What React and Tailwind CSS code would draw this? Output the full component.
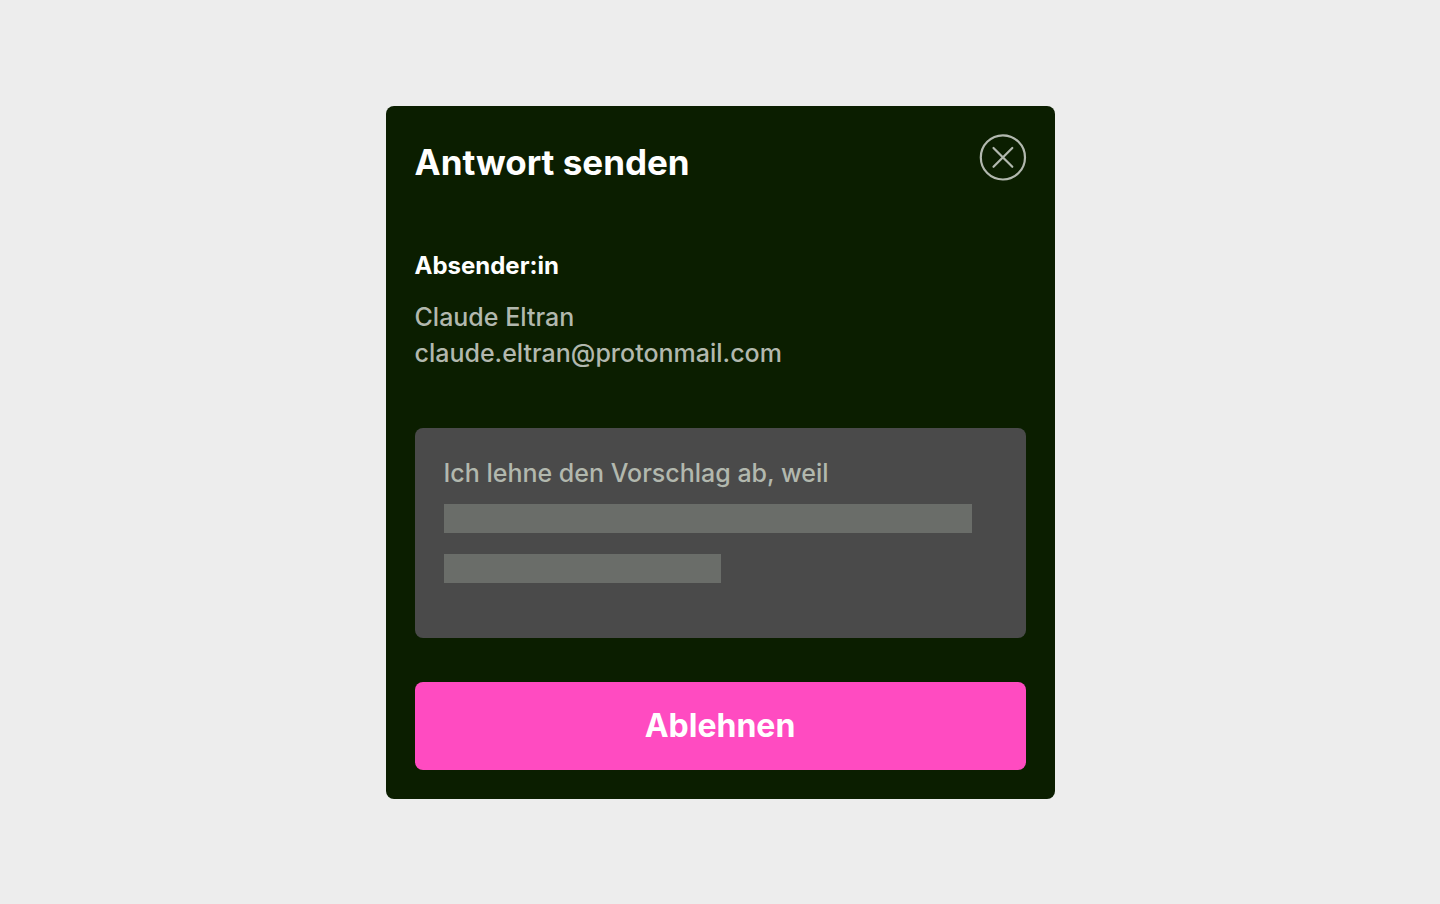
import { useState } from 'react'

function CloseIcon() {
  return (
    <svg viewBox="0 0 48 48" fill="none" stroke="currentColor" strokeWidth="2.2" className="size-12" aria-hidden="true">
      <circle cx="23.9" cy="24.4" r="22.1" />
      <path d="M14.5 15l18.8 18.8M33.3 15L14.5 33.8" strokeLinecap="round" />
    </svg>
  )
}

export default function App() {
  const [message, setMessage] = useState('Ich lehne den Vorschlag ab, weil')

  return (
    <main className="flex min-h-screen items-center justify-center bg-[#ededed] pt-px font-['Inter',sans-serif] text-[25px] font-medium text-[#b2b8ae]">
      <section
        role="dialog"
        aria-labelledby="reply-title"
        className="w-full max-w-[669px] rounded-lg bg-[#0b1e00] px-[29px] pt-[27px] pb-[29px]"
      >
        <header className="flex items-start justify-between">
          <h1 id="reply-title" className="pt-[7px] text-[35px] leading-[44px] font-bold text-white">
            Antwort senden
          </h1>
          <button type="button" aria-label="Schließen" className="-mr-px cursor-pointer">
            <CloseIcon />
          </button>
        </header>

        <div className="mt-16">
          <h2 className="text-2xl leading-9 font-bold text-white">Absender:in</h2>
          <p className="mt-[15px] leading-9">Claude Eltran</p>
          <p className="leading-9">claude.eltran@protonmail.com</p>
        </div>

        <form className="mt-[57px]" onSubmit={(e) => e.preventDefault()}>
          <div className="rounded-lg bg-[#4a4a4a] px-[29px] pt-[27px] pb-[55px]">
            <textarea
              rows={1}
              aria-label="Nachricht"
              value={message}
              onChange={(e) => setMessage(e.target.value)}
              className="block h-9 w-full resize-none overflow-hidden bg-transparent leading-9 outline-none"
            />
            {/* Lines still to be written */}
            <div className="mt-[13px] h-[29px] w-[528px] max-w-full bg-[#6a6d69]" />
            <div className="mt-[21px] h-[29px] w-[277px] max-w-full bg-[#6a6d69]" />
          </div>

          <button
            type="submit"
            className="mt-11 h-[88px] w-full cursor-pointer rounded-lg bg-[#ff4bc1] text-[32px] font-bold text-white"
          >
            Ablehnen
          </button>
        </form>
      </section>
    </main>
  )
}
